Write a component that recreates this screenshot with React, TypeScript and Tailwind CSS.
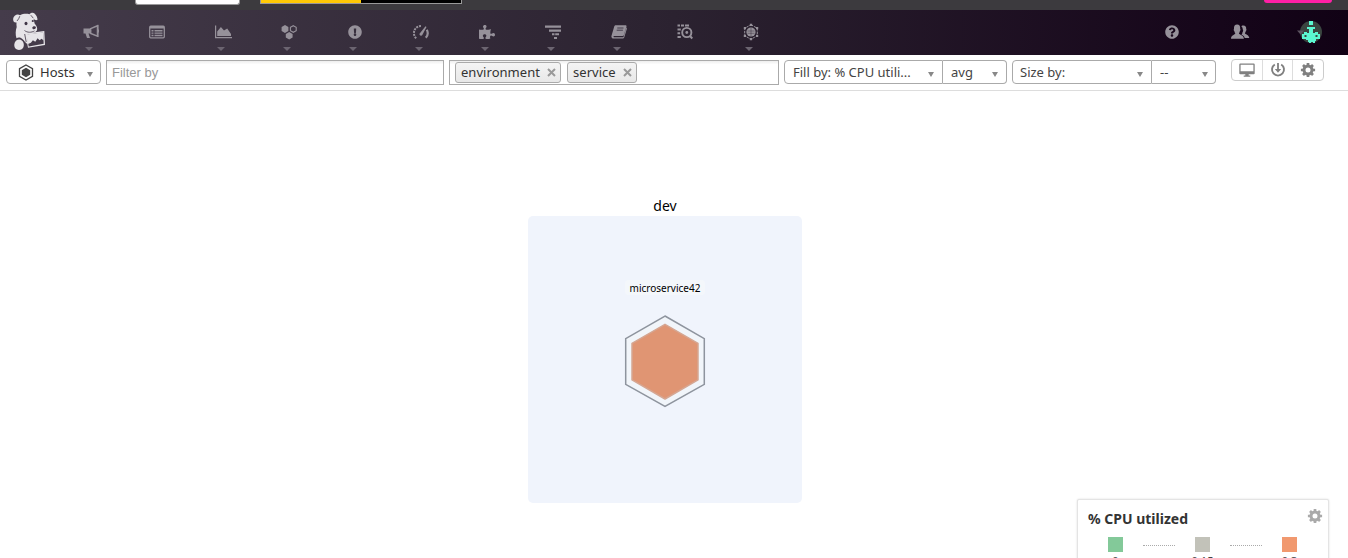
import React from "react";
import { FaExclamationCircle, FaPuzzlePiece, FaQuestionCircle } from "react-icons/fa";

type P = { children: React.ReactNode; w?: number; h?: number; vb?: string };
const Svg = ({ children, w = 18, h = 18, vb }: P) => (
  <svg width={w} height={h} viewBox={vb ?? `0 0 ${w} ${h}`} fill="currentColor" className="shrink-0">
    {children}
  </svg>
);

const Megaphone = () => (
  <Svg>
    <path d="M1.500 5.500H8V10.500H6.500L8 15H5L3.500 10.500H1.500z" />
    <path d="M8.700 5.600L15.500 2.700V13.200L8.700 10.400z" fill="none" stroke="currentColor" strokeWidth="1.500" />
    <path d="M15 2h1.500v12H15zM16 6.500h1v3h-1z" />
  </Svg>
);
const ListBox = () => (
  <Svg>
    <rect x="1.700" y="3.200" width="14.600" height="11.600" rx="1" fill="none" stroke="currentColor" strokeWidth="1.300" />
    <path d="M2 3h14v2.500H2zM3.500 7h2v1.400h-2zM6.500 7h8v1.400h-8zM3.500 9.400h2v1.400h-2zM6.500 9.400h8v1.400h-8zM3.500 11.800h2v1.400h-2zM6.500 11.800h8v1.400h-8z" />
  </Svg>
);
const Area = () => (
  <Svg>
    <path d="M1 2.500H2.200V14H18v1.200H1zM3.200 13V8.500L6.900 4 10 7.500l3.200-2L17 11v2z" />
  </Svg>
);
const Hexes = () => (
  <Svg>
    <path d="M5 2l3.400 2v3.900L5 9.900 1.600 7.900V4zM9.200 9l3.400 2v3.600L9.200 16.500l-3.400-1.900V11z" />
    <path d="M13.300 2.700l2.900 1.700v3.200l-2.900 1.700-2.900-1.700V4.400z" fill="none" stroke="currentColor" strokeWidth="1.100" />
  </Svg>
);
const Gauge = () => (
  <Svg>
    <path d="M4.200 15.200A7 7 0 0 1 9.800 3.100" fill="none" stroke="currentColor" strokeWidth="2" strokeDasharray="2 .9" />
    <path d="M14.800 6.800a7 7 0 0 1-1 8" fill="none" stroke="currentColor" strokeWidth="2.200" />
    <path d="M13.500 3.200l1 .7-4.200 8.200a1.600 1.600 0 0 1-2.800-1.400z" />
  </Svg>
);
const Traces = () => (
  <Svg>
    <path d="M1 2.500h16v2.200H1zM5 6.500h12v2.200H5zM8 10.300h2.500v2H8zM11.200 10.300H15v2h-3.800zM10 14h3v2h-3z" />
  </Svg>
);
const Book = () => (
  <Svg>
    <path d="M5.800 2.200h9.700c.8 0 1.200.6 1 1.300l-2.600 8.600c-.2.600-.7 1-1.300 1H4.200c-.9 0-1.100 1.200-.1 1.200h9.300l3-9.800c.5.300.6.800.5 1.300l-2.700 8.800c-.2.600-.7 1-1.400 1H3.600c-1.500 0-2.600-1.400-2.100-2.900L4.300 3.300c.2-.7.800-1.100 1.500-1.100z" />
    <path d="M7.300 5h6.200M6.700 7.200h6.200" stroke="#2f2635" strokeWidth=".8" fill="none" />
  </Svg>
);
const LogSearch = () => (
  <Svg>
    <path d="M1.500 1.500H4v2H1.500zM5 1.500h3v2H5zM9 1.500h4v2H9zM1.500 5.500h3.300v2H1.500zM1.500 9.200h2.600v2H1.500zM1.500 13h3.300v2H1.500z" />
    <circle cx="10.800" cy="9.500" r="4.600" fill="none" stroke="currentColor" strokeWidth="1.900" />
    <circle cx="10.800" cy="9.500" r="1.400" />
    <path d="M13.200 13.800l1.600-1.600 2.200 2.500-1.500 1.500z" />
  </Svg>
);
const Security = () => (
  <Svg>
    <path d="M9 1.700l6.300 3.600v7.400L9 16.300l-6.300-3.600V5.300z" fill="none" stroke="currentColor" strokeWidth="1" strokeDasharray="2.500 1" />
    <circle cx="9" cy="9" r="4.600" />
    <path d="M7.800.8h2.400V3H7.800zM7.800 15h2.400v2.200H7.800zM1.800 4H4v2.200H1.800zM14 4h2.200v2.200H14zM1.800 11.800H4V14H1.800zM14 11.800h2.200V14H14z" />
    <path d="M9 5v8M5.500 8h7M5.500 10.300h7" stroke="#2a2130" strokeWidth=".4" />
  </Svg>
);
const Users = () => (
  <Svg w={20} h={18}>
    <path d="M11.300 3.200C12 2.600 12.700 2.500 13.400 2.500c2 0 3 1.300 2.800 3.600.5.500.3 1.500-.3 1.900-.2.900-.6 1.500-1 1.900 0 1.600 4.100 1.500 4.400 5.100h-4.600c-.3-1.700-1.500-2.500-3.200-3.200.6-.6.900-1.600 1-2.600.8-.7.900-1.800.3-2.600 0-1.400-.4-2.500-1.500-3.400z" />
    <path d="M1 15.800c0-4.200 4.100-3.600 4.300-5.500-.6-.6-.9-1.300-1-2.200-.7-.4-.8-1.500-.3-2C3.700 3 5 1.600 7.100 1.600S10.500 3 10.200 6.100c.5.500.4 1.600-.3 2-.1.900-.4 1.600-1 2.200.2 1.900 5 1.300 5 5.500z" />
  </Svg>
);
const Dog = () => (
  <svg width="34" height="40" viewBox="0 0 34 40" className="shrink-0">
    <g fill="#e6e4e8">
      <path d="M1.200 6.500C1.500 3.500 5.500 1.200 8 3.200c3-1.600 6.500-1.700 9.500-1 1-1.400 3.500-2 5-.8 2 1.600 3 4.500 3 6.300-1.300 1-3 .3-3.900-1l1 4.800c1.300 1.400 2.600 3.600 2.600 5.600-.2 2.700-2.200 3.600-4.700 3.900l-5 .9V32c-2.500-1-3.500-4.500-6.500-6-2-.8-3.200-.5-4.500.3-1.200-3.800-1-7.800.2-11.300C4.500 13.500 4.300 12 4.500 10.500 2 10.800.8 9 1.200 6.500z" />
      <path d="M2.300 32.200C2.800 28.400 6 26.600 8.700 27.800c3.200 1.500 4 5.700 2.300 8.300-1.200 1.900-4.200 2.400-6 1.500-2-.9-3-3-2.700-5.400z" />
      <path fillRule="evenodd" d="M13.300 21.500L32.300 19l.7 14L16 35.800zM14.700 22.700l2 11.700 15-2.600-.6-11.300z" />
      <path d="M14.500 22.500l16.700-2.200.4 8.200-2-1.700-2 1.500-2-2-2.300 3.500-2.400-1.500-2 2.500-3 1.200z" />
    </g>
    <g fill="#403646">
      <ellipse cx="14" cy="11.500" rx="1.500" ry="1.700" />
      <circle cx="20.800" cy="9" r="1.100" />
      <path d="M20.300 15.500c.6-1.200 2.800-1.600 3.600-.5 0 1.300-1 2.300-2 2.300-1 0-1.700-.8-1.600-1.800z" />
    </g>
    <g fill="none" stroke="#403646" strokeWidth=".8">
      <path d="M7.800 4.200c-.6 1.500-1.400 3.500-2.800 4.800M18.800 3.200l2.500 3M12.500 18.500c2.800 2.300 7 2.200 10 .4M12.700 22l1.500 8" />
    </g>
  </svg>
);
const Avatar = () => (
  <svg width="28" height="24" viewBox="0 0 28 24" className="shrink-0">
    <circle cx="15" cy="12" r="11" fill="#3a4540" />
    <path d="M1 10.500h7l-3.500 4z" fill="#5c5360" />
    <path fillRule="evenodd" d="M13 1h4v4h-4zM11 7h8v2h-2v4h2v-1h3v2h2v5h-4v2h-1v2h-2v-1h-2v1h-2v-1h-1v-2h-2v-1H6v-5h2v-2h3v1h2V9h-2zM8.500 15v2h2v-2zM19.500 15v2h2v-2z" fill="#5bf7d1" />
  </svg>
);
const Monitor = () => (
  <Svg w={16} h={14}>
    <path fillRule="evenodd" d="M1.300.5h13.400a1 1 0 0 1 1 1v8.800a1 1 0 0 1-1 1H9.700v1.200h1.600v1.200H4.700v-1.200h1.600v-1.200h-5a1 1 0 0 1-1-1V1.500a1 1 0 0 1 1-1zm.3 1.200v6.500h12.800V1.700z" />
  </Svg>
);
const Power = () => (
  <Svg w={16} h={16}>
    <path d="M4.800 2.500a6 6 0 1 0 6.400 0" fill="none" stroke="currentColor" strokeWidth="1.900" />
    <path d="M7.100 1h1.800v6h2.300L8 10.800 4.800 7h2.300z" />
  </Svg>
);
const Gear = () => (
  <Svg w={16} h={16}>
    <circle cx="8" cy="8" r="4" fill="none" stroke="currentColor" strokeWidth="3" />
    <path d="M8 .9v3M8 12.100v3M.9 8h3M12.100 8h3M3 3l2 2M11 11l2 2M3 13l2-2M11 5l2-2" stroke="currentColor" strokeWidth="2.700" fill="none" />
  </Svg>
);

const items = [
  { icon: <Megaphone />, caret: true },
  { icon: <ListBox />, caret: false },
  { icon: <Area />, caret: true },
  { icon: <Hexes />, caret: true },
  { icon: <FaExclamationCircle size={14} />, caret: true },
  { icon: <Gauge />, caret: true },
  { icon: <FaPuzzlePiece size={16} />, caret: true },
  { icon: <Traces />, caret: true },
  { icon: <Book />, caret: true },
  { icon: <LogSearch />, caret: false },
  { icon: <Security />, caret: true },
];

const Caret = () => (
  <svg width="6" height="5" viewBox="0 0 6 5" className="mt-[3px] shrink-0" fill="#888"><path d="M0 0h6L3 5z" /></svg>
);
const Tag = ({ text }: { text: string }) => (
  <span className="flex h-[21px] items-center gap-[7px] rounded-[3px] border border-[#aaa] bg-linear-to-b from-[#f4f4f4] to-[#e8e8e8] pr-[4px] pl-[5px] tracking-[0.04px] text-[#333]">
    {text}
    <svg width="9" height="9" viewBox="0 0 9 9" stroke="#999" strokeWidth="2" className="shrink-0"><path d="M1 1l7 7M8 1L1 8" /></svg>
  </span>
);
const Select = ({ text, cls }: { text: string; cls: string }) => (
  <div className={`flex h-[24px] items-center justify-between border-[#aaa] pt-[2px] ${cls}`}>
    <span className="whitespace-nowrap">{text}</span>
    <Caret />
  </div>
);
const stops = [
  { c: "bg-[#83c999]", t: "0" },
  { c: "bg-[#c2c2b9]", t: "0.15" },
  { c: "bg-[#f1996f]", t: "0.3" },
];

export default function App() {
  return (
    <div className="flex h-[558px] w-[1348px] flex-col overflow-hidden bg-white font-['Noto_Sans',sans-serif] text-[13px] text-[#444]">
      <div className="flex h-[10px] shrink-0 items-start bg-[#3c3a3e]">
        <div className="ml-[135px] h-[5px] w-[105px] rounded-b-[3px] border border-t-0 border-[#999] bg-white" />
        <div className="ml-[20px] flex h-[4px] w-[202px] border border-t-0 border-[#999] bg-black">
          <div className="w-[100px] bg-[#ffcb05]" />
        </div>
        <div className="ml-[802px] h-[3px] w-[68px] rounded-b-[3px] bg-[#ff1fa5]" />
      </div>

      <nav className="flex h-[45px] shrink-0 bg-linear-to-r from-[#453c4b] via-[#2b2230] to-[#110215] text-[#96919a]">
        <div className="flex w-[58px] pt-[2px] pl-[12px]"><Dog /></div>
        {items.map((it, i) => (
          <div key={i} className="flex w-[66px] flex-col items-center">
            <div className="flex h-[36px] items-center pt-[8px]">{it.icon}</div>
            {it.caret && <svg width="8" height="4" viewBox="0 0 8 4" fill="#6b6470" className="mt-[1px] mr-[4px]"><path d="M0 0h8L4 4z" /></svg>}
          </div>
        ))}
        <div className="ml-auto flex h-[45px] items-center pr-[24px] pb-[1px]">
          <FaQuestionCircle size={14} className="mr-[51px]" />
          <Users />
          <span className="ml-[46px]"><Avatar /></span>
        </div>
      </nav>

      <div className="flex h-[36px] shrink-0 items-start border-b border-[#ddd] pt-[5px] pl-[6px]">
        <div className="flex h-[24px] w-[95px] items-center rounded-[4px] border border-[#aaa] pr-[7px] pl-[11px] text-[#333]">
          <svg width="16" height="17" viewBox="0 0 16 17" className="mr-[6px] shrink-0">
            <path d="M8 1l6.500 3.700v7.600L8 16l-6.500-3.700V4.700z" fill="none" stroke="#444" strokeWidth="1.300" />
            <path d="M8 3.800l4.200 2.400v4.600L8 13.200l-4.200-2.400V6.200z" fill="#444" />
          </svg>
          <span className="mr-auto pt-[2px]">Hosts</span>
          <span className="pt-[2px]"><Caret /></span>
        </div>
        <div className="ml-[5px] flex h-[25px] w-[338px] items-center border border-[#aaa] bg-linear-to-b from-[#eee] to-white to-15% pl-[5px] font-['Liberation_Sans',sans-serif] text-[#999]">Filter by</div>
        <div className="ml-[5px] flex h-[25px] w-[330px] items-center gap-[6px] border border-[#aaa] bg-linear-to-b from-[#eee] to-white to-15% pl-[5px]">
          <Tag text="environment" />
          <Tag text="service" />
        </div>
        <div className="ml-[5px] flex">
          <Select text="Fill by: % CPU utili..." cls="w-[159px] rounded-l-[4px] border pr-[8px] pl-[8px]" />
          <Select text="avg" cls="w-[64px] rounded-r-[4px] border-y border-r pr-[8px] pl-[8px]" />
        </div>
        <div className="ml-[5px] flex">
          <Select text="Size by:" cls="w-[140px] rounded-l-[4px] border pr-[8px] pl-[7px]" />
          <Select text="--" cls="w-[64px] rounded-r-[4px] border-y border-r pr-[7px] pl-[8px]" />
        </div>
        <div className="-mt-[1px] ml-[15px] flex h-[22px] w-[93px] divide-x divide-[#ddd] rounded-[4px] border border-[#ccc] text-[#808080]">
          <div className="flex flex-1 items-center justify-center"><Monitor /></div>
          <div className="flex flex-1 items-center justify-center"><Power /></div>
          <div className="flex flex-1 items-center justify-center"><Gear /></div>
        </div>
      </div>

      <main className="relative flex flex-1 flex-col pt-[104px] pl-[528px] text-black">
        <div className="mb-[1px] flex h-[20px] w-[274px] shrink-0 items-center justify-center text-[14px]">dev</div>
        <div className="flex h-[287px] w-[274px] shrink-0 flex-col items-center rounded-[5px] bg-[#f0f4fc] pt-[64px]">
          <div className="flex h-[15px] w-[80px] items-center justify-center rounded-[4px] bg-[#f4f7fb] pt-[2px] text-[10px]">microservice42</div>
          <svg width="82" height="94" viewBox="0 0 82 94" className="mt-[19px]">
            <path d="M41 2l39.300 22.700v45.600L41 92.500 1.700 70.300V24.700z" fill="#f1f5fa" stroke="#8e949e" strokeWidth="1.500" />
            <path d="M41 10.300l33 19v36.500L41 85 8 65.800V29.300z" fill="#e09573" stroke="#d5a692" strokeWidth="1.500" strokeLinejoin="round" />
          </svg>
        </div>
        <aside className="absolute top-[408px] left-[1077px] h-[100px] w-[252px] rounded-[2px] border border-[#e4e4e4] bg-white shadow-[0_0_2px_rgba(0,0,0,0.15)]">
          <div className="flex justify-between pt-[9px] pr-[5px] pl-[10px]">
            <span className="text-[14px] leading-[20px] font-bold text-[#333]">% CPU utilized</span>
            <span className="-mt-[1px] text-[#aaa]"><Gear /></span>
          </div>
          <div className="flex items-start pt-[8px] pl-[30px]">
            {stops.map((s, i) => (
              <React.Fragment key={i}>
                {i > 0 && <div className="mx-[20px] mt-[8px] w-[32px] border-t border-dotted border-[#aaa]" />}
                <div className="flex w-[15px] flex-col items-center">
                  <div className={`h-[15px] w-[15px] ${s.c}`} />
                  <span className="mt-[1px] text-[11px] leading-[16px] text-[#444]">{s.t}</span>
                </div>
              </React.Fragment>
            ))}
          </div>
        </aside>
      </main>
    </div>
  );
}
